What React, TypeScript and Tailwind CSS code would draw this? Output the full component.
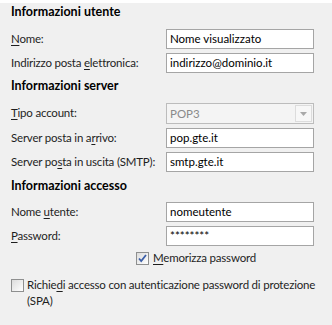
import React from 'react'

const font = { fontFamily: 'Lato, "Open Sans", sans-serif' }

const Header = ({ text, className }: { text: string; className?: string }) => (
  <div className={`h-[18px] text-[12.5px] leading-[18px] font-bold text-black ${className ?? ''}`}>{text}</div>
)

const Label = ({ before, key1, after }: { before: string; key1: string; after: string }) => (
  <span className="whitespace-nowrap pt-[1px] leading-[16px] tracking-[-0.2px]">
    {before}
    <span className="underline underline-offset-2">{key1}</span>
    {after}
  </span>
)

const Row = ({ label, value }: { label: React.ReactNode; value: string }) => (
  <div className="flex h-[24px] items-start">
    <div className="w-[155px] shrink-0 whitespace-nowrap pt-[1px]">{label}</div>
    <div className="flex h-[20px] w-[148px] items-center border border-[#a5a5a5] bg-white pl-[3px] leading-[16px] text-black">
      {value}
    </div>
  </div>
)

const App = () => {
  return (
    <div className="h-[325px] w-[332px] bg-[#f0f0f0] pl-[11px] text-[11.5px] text-[#1e1e1e]" style={font}>
      <Header text="Informazioni utente" className="mt-[3px]" />
      <div className="mt-[8px]">
        <Row label={<Label before="" key1="N" after="ome:" />} value="Nome visualizzato" />
        <Row label={<Label before="Indirizzo posta " key1="e" after="lettronica:" />} value="indirizzo@dominio.it" />
      </div>
      <Header text="Informazioni server" />
      <div className="mt-[8px]">
        <div className="flex h-[25px] items-start">
          <div className="w-[155px] shrink-0 pt-[1px]"><Label before="" key1="T" after="ipo account:" /></div>
          <div className="flex h-[21px] w-[148px] items-center border border-[#bcbcbc] bg-[#f4f4f4] pl-[3px] text-[#8a8a8a]">
            <span className="flex-1 leading-[16px]">POP3</span>
            <div className="mr-[1px] flex h-[17px] w-[17px] items-center justify-center border border-[#dcdcdc] bg-[#f7f7f7]">
              <svg width="7" height="4" viewBox="0 0 7 4"><path d="M0 0h7L3.5 4z" fill="#a9a9a9" /></svg>
            </div>
          </div>
        </div>
        <Row label={<Label before="Server posta in a" key1="r" after="rivo:" />} value="pop.gte.it" />
        <Row label={<Label before="Server po" key1="s" after="ta in uscita (SMTP):" />} value="smtp.gte.it" />
      </div>
      <Header text="Informazioni accesso" className="mt-[1px]" />
      <div className="mt-[7px]">
        <Row label={<Label before="Nome " key1="u" after="tente:" />} value="nomeutente" />
        <Row label={<Label before="" key1="P" after="assword:" />} value="********" />
      </div>
      <div className="flex h-[16px] items-center pl-[125px]">
        <div className="flex h-[13px] w-[13px] items-center justify-center border border-[#8e8f8f] bg-gradient-to-br from-[#dcdcdc] to-white">
          <svg width="9" height="9" viewBox="0 0 9 9"><path d="M1 4.5l2.2 2.5L8 1" stroke="#3c5fa8" strokeWidth="1.8" fill="none" /></svg>
        </div>
        <span className="ml-[4px] leading-[16px] tracking-[-0.2px]"><span className="underline underline-offset-2">M</span>emorizza password</span>
      </div>
      <div className="mt-[11px] flex items-start">
        <div className="mt-[2px] h-[13px] w-[13px] shrink-0 border border-[#8e8f8f] bg-gradient-to-br from-[#dcdcdc] to-white" />
        <span className="ml-[3px] leading-[16px] tracking-[-0.2px]">
          Richie<span className="underline underline-offset-2">d</span>i accesso con autenticazione password di protezione
          <br />
          (SPA)
        </span>
      </div>
    </div>
  )
}

export default App
